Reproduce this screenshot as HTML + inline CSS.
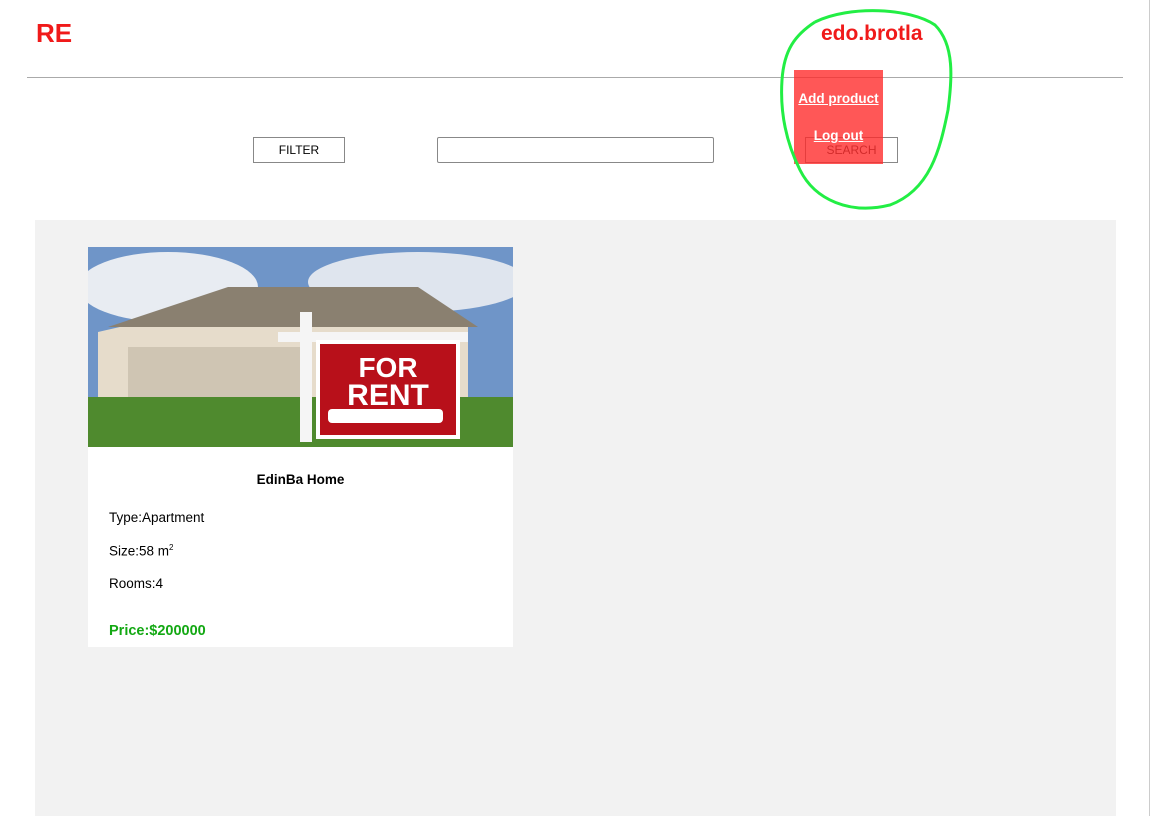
<!DOCTYPE html>
<html><head><style>
body{margin:0;width:1152px;height:816px;background:#fff;position:relative;overflow:hidden;font-family:"Liberation Sans",sans-serif}
.a{position:absolute}
</style></head><body>
<div class="a" style="left:36px;top:18px;font:bold 26px 'Liberation Sans',sans-serif;color:#f01a1a">RE</div>
<div class="a" style="left:821px;top:22px;font:bold 21px 'Liberation Sans',sans-serif;color:#f01a1a">edo.brotla</div>
<div class="a" style="left:27px;top:77px;width:1096px;height:1px;background:#aaa"></div>
<div class="a" style="left:1149px;top:0;width:1px;height:816px;background:#ccc"></div>
<div class="a" style="left:253px;top:137px;width:90px;height:24px;border:1px solid #888;font:12px 'Liberation Sans',sans-serif;text-align:center;line-height:24px">FILTER</div>
<div class="a" style="left:437px;top:137px;width:275px;height:24px;border:1px solid #888;border-radius:2px"></div>
<div class="a" style="left:805px;top:137px;width:91px;height:24px;border:1px solid #888;font:12px 'Liberation Sans',sans-serif;text-align:center;line-height:24px;color:#333">SEARCH</div>
<div class="a" style="left:794px;top:70px;width:89px;height:94px;background:rgba(255,40,40,.78)"></div>
<div class="a" style="left:784px;top:91px;width:109px;text-align:center;color:#fff;font-weight:bold;font-size:13.5px;text-decoration:underline;white-space:nowrap">Add product</div>
<div class="a" style="left:784px;top:128px;width:109px;text-align:center;color:#fff;font-weight:bold;font-size:13.5px;text-decoration:underline;white-space:nowrap">Log out</div>
<svg class="a" style="left:770px;top:0" width="200" height="220"><path d="M45 22 C80 5 140 8 165 25 C185 45 182 80 178 110 C170 150 160 190 120 205 C80 215 45 200 30 170 C15 140 10 110 12 80 C14 50 25 35 45 22" fill="none" stroke="#22ee44" stroke-width="3"/></svg>
<div class="a" style="left:35px;top:220px;width:1081px;height:596px;background:#f2f2f2"></div>
<div class="a" style="left:88px;top:247px;width:425px;height:400px;background:#fff"></div>
<svg class="a" style="left:88px;top:247px" width="425" height="200">
<rect width="425" height="200" fill="#6f95c8"/>
<ellipse cx="80" cy="40" rx="90" ry="35" fill="#e8ecf2"/><ellipse cx="330" cy="35" rx="110" ry="30" fill="#dfe5ee"/>
<rect y="150" width="425" height="50" fill="#4f8a2e"/>
<polygon points="10,85 120,60 320,60 380,80 380,150 10,150" fill="#e6dccb"/>
<polygon points="20,80 140,40 330,40 390,80" fill="#8a8070"/>
<rect x="40" y="100" width="180" height="50" fill="#cfc5b3"/>
<rect x="212" y="65" width="12" height="130" fill="#f5f5f5"/>
<rect x="190" y="85" width="190" height="10" fill="#f5f5f5"/>
<rect x="230" y="95" width="140" height="95" fill="#b8101a" stroke="#fff" stroke-width="4"/>
<text x="300" y="130" font-family="Liberation Sans" font-weight="bold" font-size="28" fill="#fff" text-anchor="middle">FOR</text>
<text x="300" y="158" font-family="Liberation Sans" font-weight="bold" font-size="30" fill="#fff" text-anchor="middle">RENT</text>
<rect x="240" y="162" width="115" height="14" fill="#fff" rx="4"/>
</svg>
<div class="a" style="left:88px;top:472px;width:425px;text-align:center;font-weight:bold;font-size:13.5px">EdinBa Home</div>
<div class="a" style="left:109px;top:510px;font-size:13.5px">Type:Apartment</div>
<div class="a" style="left:109px;top:543px;font-size:13.5px">Size:58 m<sup style="font-size:8px">2</sup></div>
<div class="a" style="left:109px;top:576px;font-size:13.5px">Rooms:4</div>
<div class="a" style="left:109px;top:623px;font-size:14.5px;font-weight:bold;color:#13a813">Price:$200000</div>
</body></html>
